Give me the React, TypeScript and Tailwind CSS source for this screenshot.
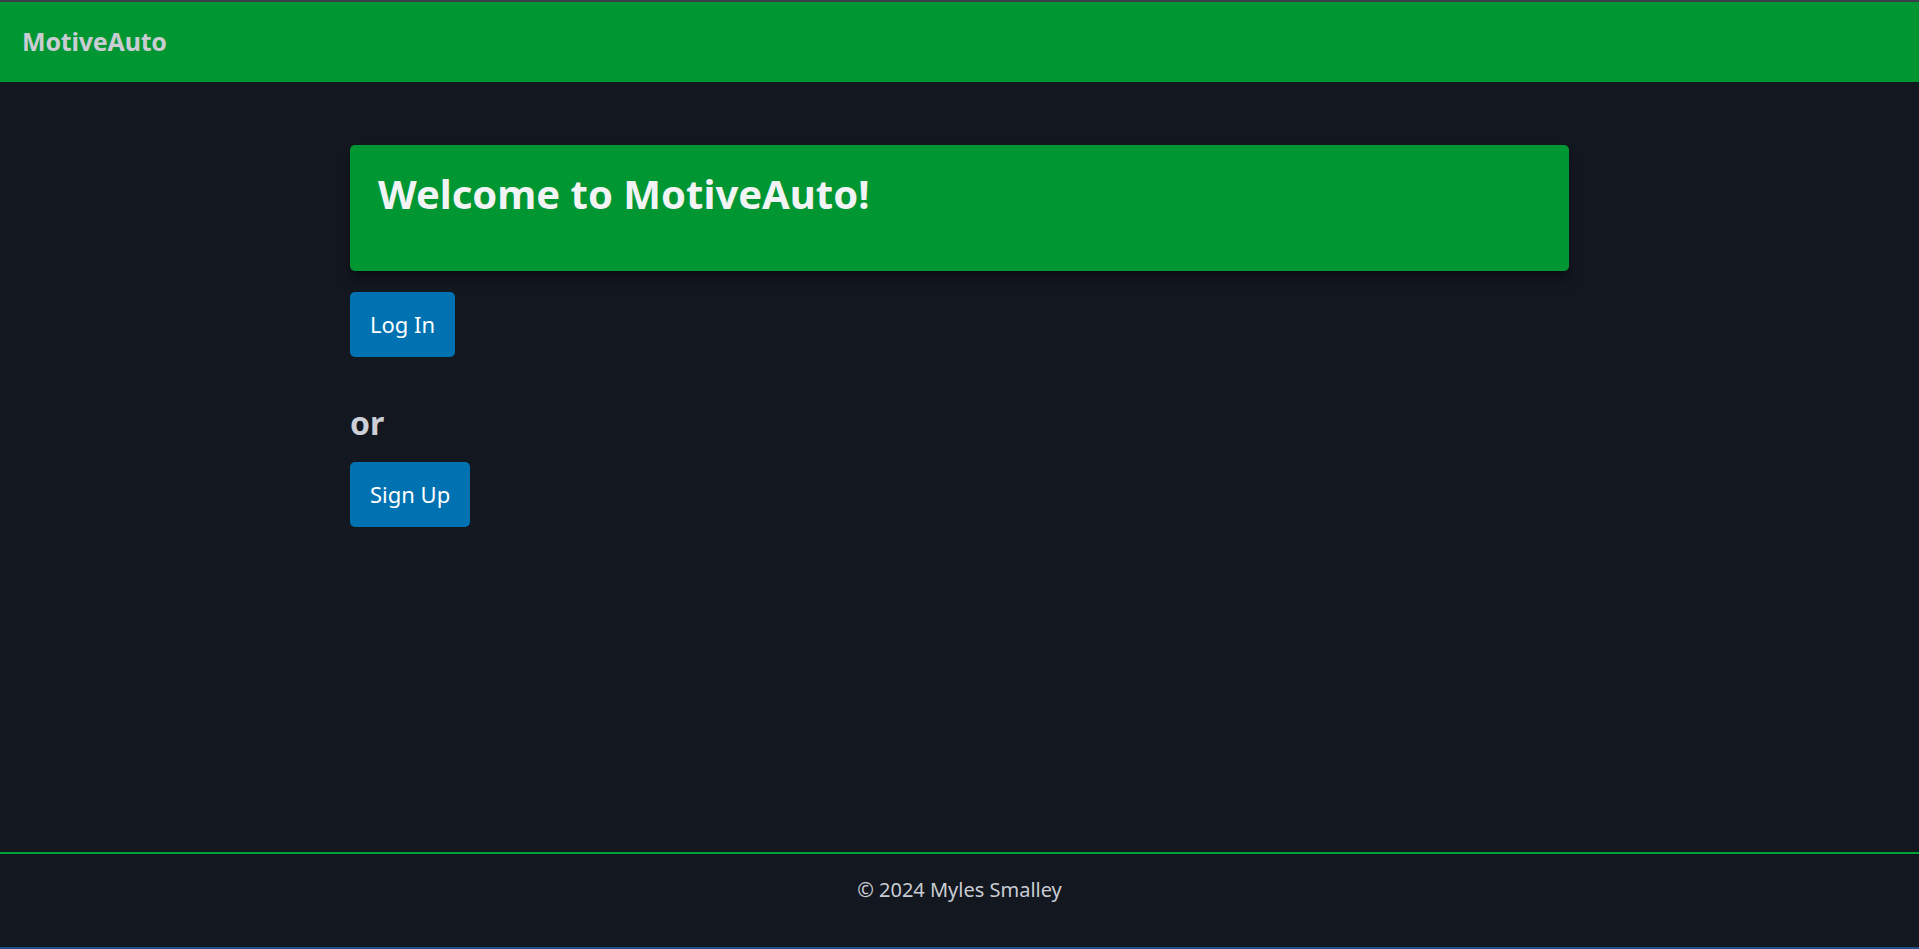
import React from 'react';

const font = { fontFamily: '"Noto Sans", "Open Sans", sans-serif' };

const ActionButton = ({ label }: { label: string }) => (
  <button className="bg-[#0072b1] text-white text-[22px] leading-[35px] py-[15px] px-[20px] rounded-[5px]">
    {label}
  </button>
);

const App = () => {
  return (
    <div className="min-h-screen flex flex-col bg-[#131720]" style={font}>
      <header className="h-[82px] border-t-2 border-[#3b3f4a] bg-[#009632] flex items-center px-[22px]">
        <span className="text-[25px] font-bold text-[#c9cdd3] tracking-[-0.2px]">MotiveAuto</span>
      </header>

      <main className="flex-1">
        <div className="max-w-[1219px] mx-auto mt-[63px]">
          <div className="bg-[#009632] rounded-[5px] shadow-lg shadow-black/40 pt-[24px] pb-[52px] px-[28px]">
            <h1 className="text-[40px] leading-[50px] font-bold text-[#f1f3f5]">Welcome to MotiveAuto!</h1>
          </div>
          <div className="mt-[21px]">
            <ActionButton label="Log In" />
          </div>
          <h2 className="mt-[46px] text-[32px] leading-[40px] font-bold text-[#ccd0d6]">or</h2>
          <div className="mt-[19px]">
            <ActionButton label="Sign Up" />
          </div>
        </div>
      </main>

      <footer className="h-[97px] border-t-2 border-b-2 border-t-[#00a03a] border-b-[#1f4f86] pt-[22px] text-center">
        <p className="text-[20px] leading-[28px] text-[#c9cdd3]">© 2024 Myles Smalley</p>
      </footer>
    </div>
  );
};

export default App;
